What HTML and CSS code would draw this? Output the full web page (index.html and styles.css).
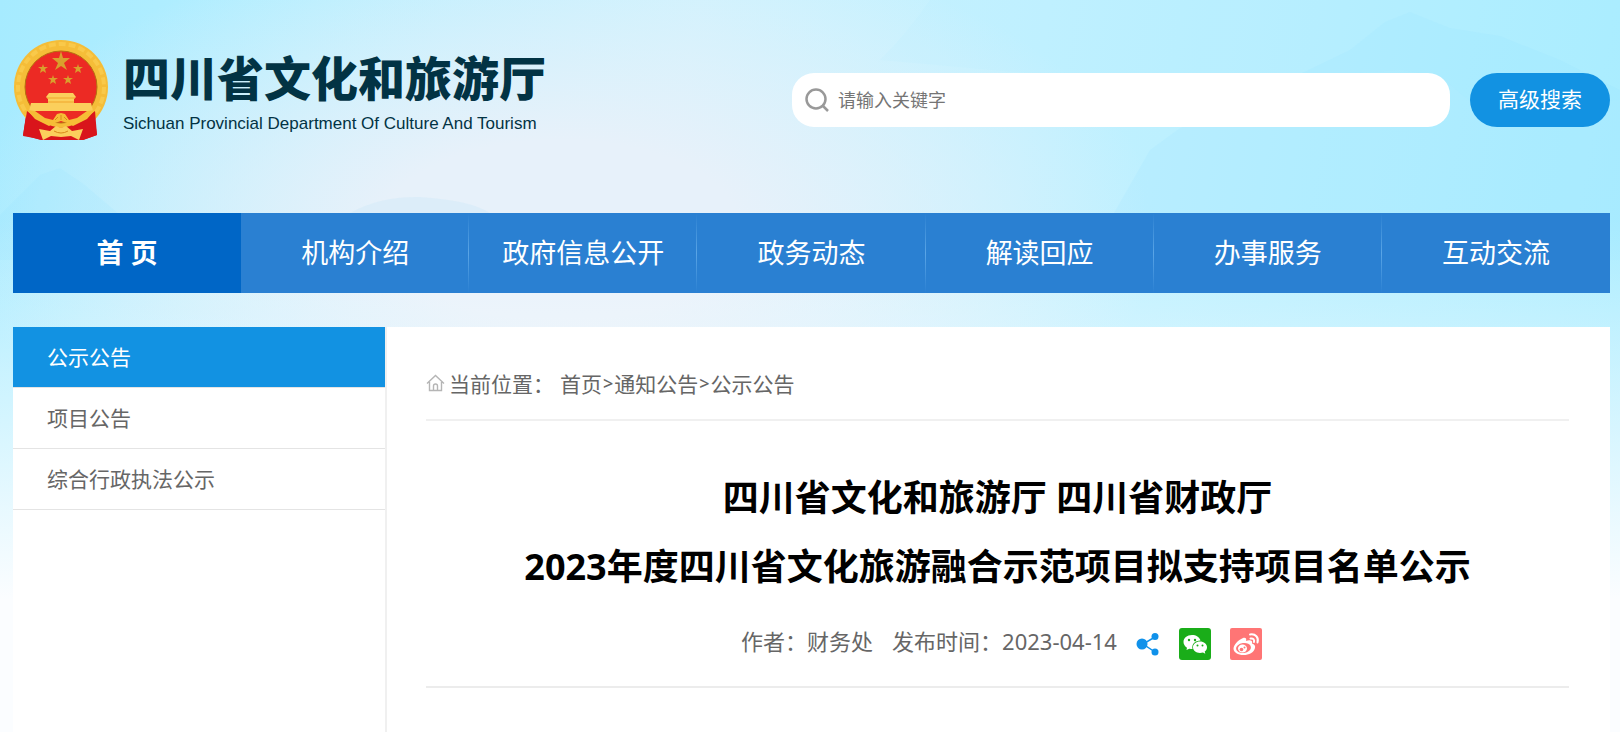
FILE: index.html
```html
<!DOCTYPE html>
<html lang="zh-CN">
  <head>
    <meta charset="UTF-8">
    <title>公示公告 - 四川省文化和旅游厅</title>
    <link rel="stylesheet" href="styles.css">
  </head>
  <body>
    <!-- mountains behind the header -->
    <svg class="scenery" viewBox="0 0 1620 330" preserveAspectRatio="none" aria-hidden="true">
      <path class="far" d="M880 60 Q910 30 930 0 H1620 V100 L1480 110 L1440 76 L1400 70 L1290 78 L1220 90 Z" />
      <path class="near" d="M1110 220 L1150 150 L1180 128 L1260 96 L1300 74 L1350 50 L1385 22 L1410 12 L1450 28 L1500 36 L1560 60 L1620 90 V260 H1110 Z" />
      <path class="near" d="M0 215 L40 175 L60 168 L85 185 L120 215 L170 225 L210 260 H0 Z" />
      <path class="mist" d="M350 213 Q380 196 420 197 Q470 200 490 213 Z" />
    </svg>

    <div class="page">
      <header class="header">
        <a class="logo" href="#">
          <svg class="emblem" viewBox="0 0 96 104" aria-hidden="true">
            <path fill="#d9151b" d="M14 70 L10 98 L21 100 L29 102 L40 99 L48 102 L58 102 L70 102 L84 97 L80 70 Z" />
            <circle cx="48" cy="49" r="47" fill="#f5bd38" />
            <circle cx="48" cy="49" r="43" fill="none" stroke="#f9c94a" stroke-width="4" stroke-dasharray="7 3" />
            <circle cx="48" cy="49" r="36" fill="#ec2a24" stroke="#b5700f" stroke-width="1" />
            <g fill="#d9a02d">
              <path d="M48 13 L50 20 L57 20 L51 25 L54 32 L48 28 L42 32 L45 25 L39 20 L46 20 Z" />
              <path d="M30 26 l1 3 h4 l-3 2 l1 4 l-3 -2 l-3 2 l1 -4 l-3 -2 h4 Z" />
              <path d="M65 26 l1 3 h4 l-3 2 l1 4 l-3 -2 l-3 2 l1 -4 l-3 -2 h4 Z" />
              <path d="M40 37 l1 3 h4 l-3 2 l1 4 l-3 -2 l-3 2 l1 -4 l-3 -2 h4 Z" />
              <path d="M55 37 l1 3 h4 l-3 2 l1 4 l-3 -2 l-3 2 l1 -4 l-3 -2 h4 Z" />
            </g>
            <path fill="#fbcf5c" d="M36 55 H60 L63 59 L61 61 V65 H78 L80 73 H16 L18 65 H35 V61 L33 59 Z" />
            <path fill="none" stroke="#f0a52a" d="M34 60 H62 M35 64 H61" />
            <path fill="#d9151b" d="M14 73 L27 83 L39 88 L48 90 L57 88 L69 83 L82 73 L84 97 L70 102 H28 L10 97 Z" />
            <path fill="#f6bd36" d="M14 72 L22 73 L32 80 L40 82 L44 76 L48 75 L52 76 L56 82 L64 80 L74 73 L82 72 L74 81 L60 88 L54 85 L48 83 L42 85 L36 88 L22 81 Z" />
            <path fill="#fbcf5c" d="M26 91 L37 93 L43 88 L48 90 L53 88 L59 93 L70 91 L66 102 L58 98 L48 99 L38 98 L30 102 Z" />
            <path fill="none" stroke="#d98a1a" d="M42 82 L45 79 M48 82 V77 M54 82 L51 79 M41 93 Q48 97 55 93" />
          </svg>
          <span class="logo-text">
            <strong>四川省文化和旅游厅</strong>
            <small>Sichuan Provincial Department Of Culture And Tourism</small>
          </span>
        </a>
        <form class="search">
          <label class="search-box">
            <svg width="24" height="26" viewBox="0 0 24 26" fill="none" stroke="#999" stroke-width="2.5" aria-hidden="true">
              <circle cx="11" cy="12" r="9.500" />
              <path d="M17 18 L23 24" />
            </svg>
            <input type="text" placeholder="请输入关键字" aria-label="请输入关键字">
          </label>
          <button type="button">高级搜索</button>
        </form>
      </header>

      <nav class="nav">
        <a class="active" href="#">首 页</a>
        <a href="#">机构介绍</a>
        <a href="#">政府信息公开</a>
        <a href="#">政务动态</a>
        <a href="#">解读回应</a>
        <a href="#">办事服务</a>
        <a href="#">互动交流</a>
      </nav>

      <div class="content">
        <aside class="sidebar">
          <a class="active" href="#">公示公告</a>
          <a href="#">项目公告</a>
          <a href="#">综合行政执法公示</a>
        </aside>

        <main class="article">
          <div class="crumbs">
            <svg width="19" height="18" viewBox="0 0 19 18" fill="none" stroke="#b5b5b5" stroke-width="1.4" aria-hidden="true">
              <path d="M1 9.500 L9.500 1.500 L18 9.500 M3.500 8 V16.500 H15.500 V8 M7.500 16 V12 Q7.500 10 9.500 10 Q11.500 10 11.500 12 V16" />
            </svg>
            <span class="label">当前位置：</span>
            <a href="#">首页</a><b>&gt;</b><a href="#">通知公告</a><b>&gt;</b><a href="#">公示公告</a>
          </div>

          <h1>四川省文化和旅游厅 四川省财政厅<br>2023年度四川省文化旅游融合示范项目拟支持项目名单公示</h1>

          <div class="meta">
            <span>作者：财务处</span>
            <span>发布时间：2023-04-14</span>
            <a href="#" aria-label="分享">
              <svg width="24" height="32" viewBox="0 0 24 32" aria-hidden="true">
                <path d="M19 9 L7 16 L19 24" fill="none" stroke="#1091ea" stroke-width="1.5" />
                <g fill="#1091ea">
                  <circle cx="6" cy="16" r="5.500" />
                  <circle cx="19" cy="8.500" r="3.500" />
                  <circle cx="19" cy="24" r="3.500" />
                </g>
              </svg>
            </a>
            <a href="#" aria-label="微信">
              <svg width="32" height="32" viewBox="0 0 32 32" aria-hidden="true">
                <rect width="32" height="32" rx="3" fill="#1aad19" />
                <path fill="#fff" d="M13 7 C8 7 4.500 10 4.500 14 C4.500 16.500 6 18.500 8 19.700 L7.500 22 L10.300 20.700 C11.500 21 12.500 21 13.500 21 C12.500 16 16 12.500 21.500 12.500 C20.500 9 17 7 13 7 Z" />
                <path fill="#fff" d="M21 13.500 C17 13.500 14 16 14 19.300 C14 22.500 17 25 21 25 C22 25 23 24.800 24 24.500 L26.300 25.800 L25.700 23.600 C27.200 22.500 28 21 28 19.300 C28 16 25 13.500 21 13.500 Z" />
                <g fill="#1aad19">
                  <circle cx="10" cy="12" r="1.200" />
                  <circle cx="16" cy="12" r="1.200" />
                  <circle cx="18.500" cy="17.500" r="1" />
                  <circle cx="23.500" cy="17.500" r="1" />
                </g>
              </svg>
            </a>
            <a href="#" aria-label="微博">
              <svg width="32" height="32" viewBox="0 0 32 32" aria-hidden="true">
                <rect width="32" height="32" rx="2" fill="#ff7575" />
                <path fill="#fff" d="M13 10 C15 9 17 10 16 13 C20 11.500 23 12.500 22 15.500 C24.500 16.200 25.500 18 25 20 C24 24.500 19 27 13.500 27 C8 27 3.500 24.500 3.500 20.500 C3.500 17 8 12 13 10 Z" />
                <ellipse cx="13.500" cy="20" rx="7.500" ry="5" transform="rotate(-8 13.500 20)" fill="#ff7575" />
                <ellipse cx="12.500" cy="20.500" rx="4.500" ry="4" fill="#fff" />
                <circle cx="11.500" cy="21.500" r="1.800" fill="#ff7575" />
                <circle cx="14.500" cy="19.500" r="1" fill="#ff7575" />
                <path d="M20 6.500 C25.500 5.500 29 9.500 27.500 14.500 M20.500 10.500 C23 10 24.700 11.500 24 14" fill="none" stroke="#fff" stroke-width="2" stroke-linecap="round" />
              </svg>
            </a>
          </div>
        </main>
      </div>
    </div>
  </body>
</html>
```

FILE: styles.css
```css
* {
  box-sizing: border-box;
}

body {
  margin: 0;
  min-height: 100vh;
  font-family: "Noto Sans", "Noto Sans CJK SC", sans-serif;
  font-size: 21px;
  color: #666;
  background:
    linear-gradient(to bottom, rgba(255, 255, 255, 0) 220px, #fbfdff 600px),
    radial-gradient(ellipse 600px 300px at 560px 230px, #e7f1fa 30%, rgba(231, 241, 250, 0) 100%),
    linear-gradient(100deg, #a6ebff 0%, #b6efff 18%, #ccf2fe 40%, #c2f1ff 60%, #a8ecff 100%);
}

a {
  color: inherit;
  text-decoration: none;
}

svg {
  display: block;
  flex-shrink: 0;
}

.scenery {
  position: absolute;
  top: 0;
  left: 0;
  width: 100%;
  height: 330px;
  z-index: -1;
}

.far {
  fill: rgba(150, 230, 255, 0.06);
}

.near {
  fill: rgba(140, 225, 252, 0.12);
}

.mist {
  fill: rgba(205, 232, 248, 0.4);
}

.page {
  display: flex;
  flex-direction: column;
  min-height: 100vh;
  padding: 0 10px 0 13px;
}

/* header */
.header {
  display: flex;
  justify-content: space-between;
  align-items: center;
  height: 213px;
  padding-bottom: 13px;
}

.logo {
  display: flex;
  align-items: center;
  gap: 14px;
  color: #023344;
  padding-bottom: 20px;
}

.emblem {
  width: 96px;
  height: 104px;
}

.logo-text {
  display: flex;
  flex-direction: column;
  gap: 10px;
  padding-top: 6px;
}

.logo-text strong {
  font-size: 47px;
  font-weight: 900;
  line-height: 52px;
}

.logo-text small {
  font-family: "Liberation Sans", Arial, sans-serif;
  font-size: 17px;
  line-height: 20px;
}

.search {
  display: flex;
  gap: 20px;
  width: 818px;
}

.search-box {
  display: flex;
  flex: 1;
  align-items: center;
  gap: 9px;
  height: 54px;
  padding: 0 13px;
  border-radius: 22px;
  background-color: #fff;
}

.search-box input {
  flex: 1;
  border: 0;
  outline: 0;
  padding: 0;
  font-family: inherit;
  font-size: 18px;
  background: none;
}

.search-box input::placeholder {
  color: #757575;
}

.search button {
  width: 140px;
  border: 0;
  border-radius: 27px;
  padding: 0 0 4px;
  font-family: inherit;
  font-size: 21px;
  color: #fff;
  background-color: #1292e2;
}

/* navigation */
.nav {
  display: grid;
  grid-template-columns: repeat(7, 1fr);
  background-color: #2a80d2;
}

.nav a {
  font-size: 27px;
  line-height: 80px;
  text-align: center;
  color: #fff;
  background: linear-gradient(rgba(90, 165, 230, 0), #5aa5e6, rgba(90, 165, 230, 0)) right / 1px 100% no-repeat;
}

.nav a:last-child {
  background: none;
}

.nav .active {
  font-weight: bold;
  background: #0066c6;
}

/* content */
.content {
  display: flex;
  flex: 1;
  margin-top: 34px;
  background-color: #fff;
}

.sidebar {
  width: 374px;
  border-right: 2px solid #f0f0f0;
}

.sidebar a {
  display: block;
  padding-left: 34px;
  line-height: 60px;
  border-bottom: 1px solid #e4e4e4;
}

.sidebar .active {
  color: #fff;
  background-color: #1292e2;
}

.article {
  flex: 1;
  padding: 20px 41px 0 39px;
}

.crumbs {
  display: flex;
  align-items: center;
  height: 74px;
  border-bottom: 2px solid #f0f0f0;
}

.crumbs .label {
  margin: 0 6px 0 4px;
}

.crumbs b {
  padding: 0 1px;
  font-size: 18px;
  font-weight: 500;
}

h1 {
  margin: 42px 0 0;
  font-size: 36px;
  line-height: 69px;
  text-align: center;
  color: #000;
}

.meta {
  display: flex;
  justify-content: center;
  align-items: center;
  gap: 19px;
  height: 87px;
  padding-left: 8px;
  font-size: 22px;
  border-bottom: 2px solid #ececec;
}

.meta span {
  padding-bottom: 8px;
}
```
